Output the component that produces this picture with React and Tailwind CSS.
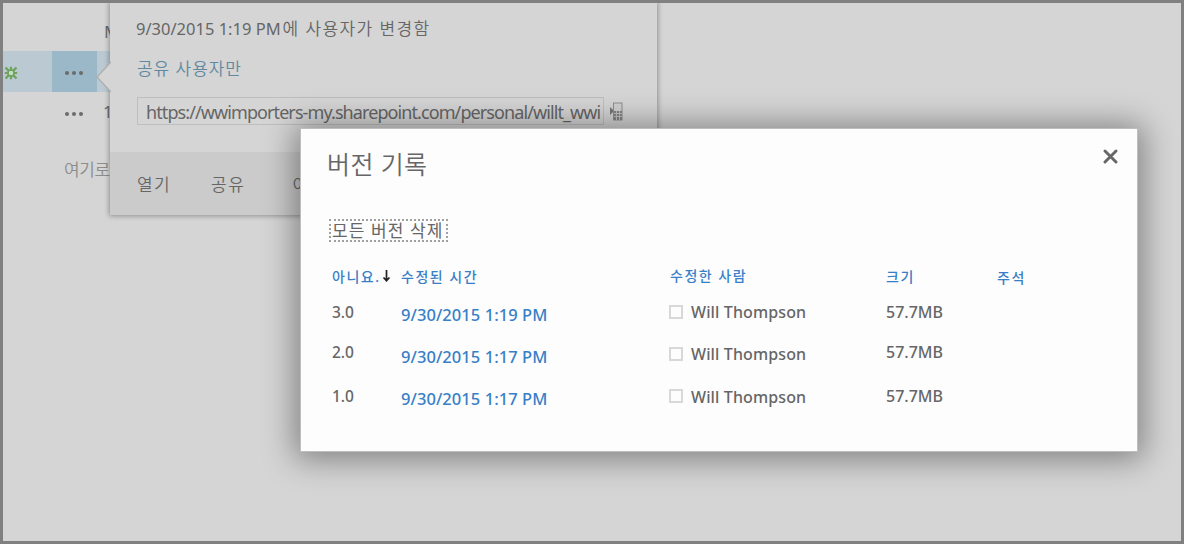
const versions = [
  { no: '3.0', date: '9/30/2015 1:19 PM', noPad: 'pt-0', namePad: 'pt-0', boxTop: 'mt-[5px]' },
  { no: '2.0', date: '9/30/2015 1:17 PM', noPad: '-mt-[2px]', namePad: 'pt-0', boxTop: 'mt-[5px]' },
  { no: '1.0', date: '9/30/2015 1:17 PM', noPad: 'pt-0', namePad: 'pt-[1px]', boxTop: 'mt-[4px]' },
];

function Dots() {
  return (
    <span className="flex gap-[3px]">
      <i className="size-1 rounded-full bg-[#6b6b6b]" />
      <i className="size-1 rounded-full bg-[#6b6b6b]" />
      <i className="size-1 rounded-full bg-[#6b6b6b]" />
    </span>
  );
}

function NewBadge() {
  return (
    <svg width="14" height="14" viewBox="0 0 14 14" fill="none" stroke="#6da35a">
      <rect x="4.1" y="4.1" width="5.8" height="5.8" rx="1.8" fill="#c3dac6" strokeWidth="1.7" />
      <path d="M7 .8v3M7 10.2v3M.8 7h3M10.2 7h3" strokeWidth="2.1" />
      <path d="M1.5 1.5l3 3M12.5 1.5l-3 3M1.5 12.5l3-3M12.5 12.5l-3-3" strokeWidth="2.3" />
    </svg>
  );
}

function PhoneIcon() {
  return (
    <svg width="13" height="19" viewBox="0 0 13 19" fill="none">
      <path d="M0 5l4 4-4 4z" fill="#777" />
      <rect x="3.5" y="1" width="8.5" height="17" fill="#d0d0d0" stroke="#8d8d8d" />
      <rect x="4" y="9" width="8" height="9" fill="#858585" />
      <path d="M4 11.5h8M4 14.5h8M6.5 9v9M9.5 9v9" stroke="#c9c9c9" strokeWidth=".8" />
    </svg>
  );
}

function FileList() {
  return (
    <div className="flex w-[107px] flex-col overflow-hidden text-[17px] leading-6 text-[#6b6b6b]">
      <div className="h-12 pt-[17px] pl-[101px]">M</div>
      <div className="flex h-[41px] bg-[#bac9d2]">
        <div className="flex w-[49px] items-center pt-[2px] pl-[1px]"><NewBadge /></div>
        <div className="flex w-[45px] items-center justify-center bg-[#9ab8c7] pt-[2px] pr-[2px]"><Dots /></div>
      </div>
      <div className="flex h-[41px] items-center">
        <div className="w-[62px] shrink-0" />
        <div className="shrink-0 pt-[2px]"><Dots /></div>
        <span className="-mt-[1px] ml-[20px]">1</span>
      </div>
      <div className="mt-[25px] ml-[61px] text-[17px] font-[350] tracking-[-0.4px] whitespace-nowrap text-[#8c8c8c]">여기로</div>
    </div>
  );
}

function Callout() {
  return (
    <section className="absolute top-0 left-[107px] h-[212px] w-[547px] bg-[#d5d5d5] text-[#666] shadow-[0_0_5px_1px_rgba(0,0,0,0.32)]">
      <svg className="absolute top-[58px] -left-[14px]" width="15" height="32" viewBox="0 0 15 32">
        <path d="M15 1L1 16l14 15" fill="#d5d5d5" stroke="#b0b0b0" strokeWidth="1.5" />
        <path d="M15 2.5L2.5 16 15 29.5z" fill="#d5d5d5" />
      </svg>
      <div className="flex h-[149px] flex-col items-start pl-[27px] whitespace-nowrap">
        <p className="mt-[14px] -ml-px text-[16.5px] leading-6">
          9/30/2015 1:19 PM<span className="ml-[2px] text-[17px] font-[350] tracking-[1.4px]">에 사용자가 변경함</span>
        </p>
        <p className="mt-[16px] text-[17px] leading-6 font-[350] tracking-[0.95px] text-[#6089a0]">공유 사용자만</p>
        <div className="mt-[16px] flex items-center gap-[6px]">
          <div className="h-7 w-[467px] overflow-hidden border border-[#bebebe] pl-[8px] text-[18px] leading-[29px] tracking-[-0.91px]">https://wwimporters-my.sharepoint.com/personal/willt_wwi</div>
          <PhoneIcon />
        </div>
      </div>
      <footer className="flex h-[63px] gap-[40px] bg-[#cbcbcb] pt-[21px] pl-[27px] text-[17px] leading-6 font-[350] tracking-[1.4px]">
        <span>열기</span><span>공유</span><span className="pl-[7px]">이</span>
      </footer>
    </section>
  );
}

function Dialog() {
  return (
    <section className="absolute top-[125px] left-[297px] h-[324px] w-[838px] border border-[#bebebe] bg-[#fdfdfd] text-[#666] shadow-[0_2px_30px_5px_rgba(0,0,0,0.4)]">
      <header className="flex h-[90px] items-start justify-between pt-[17px] pr-[19px] pl-[26px]">
        <h1 className="text-[25px] leading-9 font-[350] tracking-[0.4px]">버전 기록</h1>
        <svg className="mt-[3px]" width="15" height="15" viewBox="0 0 15 15">
          <path d="M2 2l11 11M13 2L2 13" stroke="#666" strokeWidth="2.9" strokeLinecap="round" />
        </svg>
      </header>
      <button className="ml-[28px] block h-[23px] w-[119px] border-2 border-dotted border-[#a0a0a0] pl-[1px] text-left text-[17px] leading-[20px] tracking-[1.1px] whitespace-nowrap">모든 버전 삭제</button>
      <div className="mt-[24px] grid grid-cols-[69px_269px_216px_111px_100px] pl-[31px] text-[14px] leading-5 font-medium tracking-[1.5px] whitespace-nowrap text-[#387fc7]">
        <span className="flex items-center">아니요.
          <svg className="-mt-[3px] ml-[2px] shrink-0" width="9" height="12" viewBox="0 0 9 12"><path d="M4.5 0v11M1.5 7.5l3 3.2 3-3.2" fill="none" stroke="#222" strokeWidth="1.7" /></svg>
        </span>
        <span className="pt-[1px]">수정된 시간</span><span>수정한 사람</span><span className="pt-[1px]">크기</span><span className="pt-[2px]">주석</span>
      </div>
      <div className="mt-[12px] text-[16px] leading-6 font-medium whitespace-nowrap">
        {versions.map((v) => (
          <div key={v.no} className="grid h-[42px] grid-cols-[69px_268px_217px_111px] pl-[31px]">
            <span className={`${v.noPad} text-[15.5px]`}>{v.no}</span>
            <span className="pt-[3px] text-[16.5px] leading-6 tracking-[0.06px] text-[#387fc7]">{v.date}</span>
            <span className={`flex items-start tracking-[0.12px] ${v.namePad}`}>
              <i className={`mr-[8px] size-[14px] border-2 border-[#d8d8d8] ${v.boxTop}`} />Will Thompson
            </span>
            <span className={v.noPad}>57.7MB</span>
          </div>
        ))}
      </div>
    </section>
  );
}

export default function App() {
  return (
    <main className="relative h-[544px] w-[1184px] overflow-hidden border-[3px] border-[#808080] bg-[#d5d5d5] font-['Noto_Sans','Noto_Sans_CJK_KR',sans-serif]">
      <FileList />
      <Callout />
      <Dialog />
    </main>
  );
}
